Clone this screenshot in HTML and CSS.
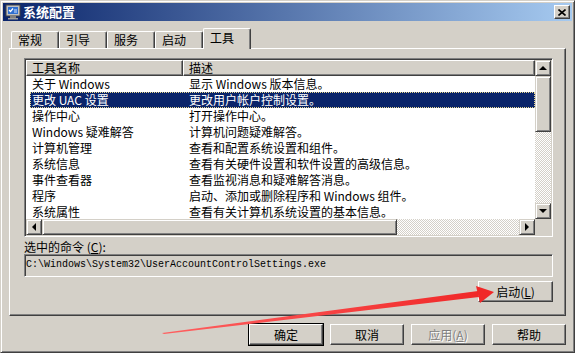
FILE: index.html
```html
<!DOCTYPE html>
<html lang="zh-CN">
<head>
    <meta charset="UTF-8">
    <title>系统配置</title>
    <link rel="stylesheet" href="styles.css">
</head>
<body>
    <div class="window">
        <div class="titlebar">
            <svg class="app-icon" width="16" height="16" viewBox="0 0 16 16">
                <rect x="1" y="1" width="14" height="11" fill="#c0c0c0" stroke="#404040"/>
                <rect x="3" y="3" width="10" height="7" fill="#2f6fd0"/>
                <path d="M4 6l1.5 1.5L8 4.5" stroke="#fff" stroke-width="1.2" fill="none"/>
                <path d="M9 6h3M9 8h3" stroke="#cfe2ff" stroke-width="1"/>
                <rect x="5" y="12" width="6" height="2" fill="#808080"/>
                <rect x="3" y="14" width="10" height="1.5" fill="#a0a0a0"/>
            </svg>
            <span class="title">系统配置</span>
            <div class="close-btn">
                <svg width="8" height="7" viewBox="0 0 8 7">
                    <path d="M0.5 0.5L7.5 6.5M7.5 0.5L0.5 6.5" stroke="#000" stroke-width="1.6"/>
                </svg>
            </div>
        </div>

        <div class="client">
            <div class="tabs">
                <div class="tab">常规</div>
                <div class="tab">引导</div>
                <div class="tab">服务</div>
                <div class="tab">启动</div>
                <div class="tab active">工具</div>
            </div>

            <div class="panel">
                <div class="listview">
                    <div class="lv-body">
                        <div class="lv-header">
                            <div class="hcell c1">工具名称</div>
                            <div class="hcell c2">描述</div>
                        </div>
                        <div class="row"><div class="c1">关于 Windows</div><div class="c2">显示 Windows 版本信息。</div></div>
                        <div class="row selected"><div class="c1">更改 UAC 设置</div><div class="c2">更改用户帐户控制设置。</div></div>
                        <div class="row"><div class="c1">操作中心</div><div class="c2">打开操作中心。</div></div>
                        <div class="row"><div class="c1">Windows 疑难解答</div><div class="c2">计算机问题疑难解答。</div></div>
                        <div class="row"><div class="c1">计算机管理</div><div class="c2">查看和配置系统设置和组件。</div></div>
                        <div class="row"><div class="c1">系统信息</div><div class="c2">查看有关硬件设置和软件设置的高级信息。</div></div>
                        <div class="row"><div class="c1">事件查看器</div><div class="c2">查看监视消息和疑难解答消息。</div></div>
                        <div class="row"><div class="c1">程序</div><div class="c2">启动、添加或删除程序和 Windows 组件。</div></div>
                        <div class="row"><div class="c1">系统属性</div><div class="c2">查看有关计算机系统设置的基本信息。</div></div>
                    </div>
                    <div class="vscroll">
                        <div class="sbtn"><span class="tri up"></span></div>
                        <div class="thumb"></div>
                        <div class="track"></div>
                        <div class="sbtn"><span class="tri down"></span></div>
                    </div>
                    <div class="hscroll">
                        <div class="sbtn"><span class="tri left"></span></div>
                        <div class="thumb"></div>
                        <div class="track"></div>
                        <div class="sbtn"><span class="tri right"></span></div>
                    </div>
                    <div class="corner"></div>
                </div>

                <div class="cmd-label">选中的命令 (<u>C</u>):</div>
                <div class="cmd-box">C:\Windows\System32\UserAccountControlSettings.exe</div>

                <div class="launch-row">
                    <button class="btn">启动(<u>L</u>)</button>
                </div>
            </div>

            <div class="dialog-buttons">
                <button class="btn default">确定</button>
                <button class="btn">取消</button>
                <button class="btn disabled">应用(<u>A</u>)</button>
                <button class="btn">帮助</button>
            </div>
        </div>
    </div>

    <svg class="red-arrow" width="575" height="353" viewBox="0 0 575 353">
        <defs>
            <linearGradient id="arrowFill" x1="0" y1="0" x2="1" y2="0">
                <stop offset="0" stop-color="#ff6060"/>
                <stop offset="1" stop-color="#f02828"/>
            </linearGradient>
        </defs>
        <polygon points="162,333 478,291 479,297 164,334" fill="url(#arrowFill)"/>
        <polygon points="476,286 494,292 480,303" fill="#f02828"/>
    </svg>
</body>
</html>
```

FILE: styles.css
```css
* {
    margin: 0;
    padding: 0;
    box-sizing: border-box;
}

body {
    position: relative;
    width: 575px;
    height: 353px;
    font-family: "Noto Sans CJK SC", "DejaVu Sans", sans-serif;
    font-size: 12px;
    color: #000;
    background: #d4d0c8;
    overflow: hidden;
}

.window {
    width: 575px;
    height: 353px;
    background: #d4d0c8;
    border: 1px solid;
    border-color: #d4d0c8 #404040 #404040 #d4d0c8;
    box-shadow: inset 1px 1px #fff, inset -1px -1px #808080;
    padding: 2px;
    display: flex;
    flex-direction: column;
}

.titlebar {
    height: 18px;
    display: flex;
    align-items: center;
    padding: 0 2px 0 2px;
    background: linear-gradient(to right, #0a246a, #a6caf0);
}

.app-icon {
    flex: none;
}

.title {
    margin-left: 2px;
    color: #fff;
    font-size: 13px;
    font-weight: bold;
    line-height: 16px;
}

.close-btn {
    margin-left: auto;
    width: 16px;
    height: 14px;
    display: flex;
    align-items: center;
    justify-content: center;
    background: #d4d0c8;
    border: 1px solid;
    border-color: #fff #404040 #404040 #fff;
    box-shadow: inset -1px -1px #808080;
}

.client {
    flex: 1;
    display: flex;
    flex-direction: column;
    padding: 7px 6px 0 6px;
}

/* tabs */
.tabs {
    height: 20px;
    display: flex;
    align-items: flex-end;
    padding-left: 2px;
}

.tab {
    width: 48px;
    height: 17px;
    padding-left: 6px;
    line-height: 16px;
    border: 1px solid;
    border-color: #fff #404040 transparent #fff;
    border-bottom: none;
    border-radius: 2px 2px 0 0;
    box-shadow: inset -1px 0 #808080;
}

.tab.active {
    position: relative;
    z-index: 1;
    height: 21px;
    margin-bottom: -1px;
    line-height: 17px;
    background: #d4d0c8;
}

.panel {
    height: 268px;
    padding: 9px 0 0 14px;
    border: 1px solid;
    border-color: #fff #404040 #404040 #fff;
    box-shadow: inset -1px -1px #808080;
}

/* list view */
.listview {
    width: 529px;
    height: 179px;
    display: grid;
    grid-template-columns: 1fr 16px;
    grid-template-rows: 1fr 16px;
    background: #fff;
    border: 1px solid;
    border-color: #808080 #fff #fff #808080;
    box-shadow: inset 1px 1px #404040, inset -1px -1px #d4d0c8;
    padding: 1px;
}

.lv-body {
    overflow: hidden;
}

.lv-header {
    display: flex;
    height: 16px;
    background: #d4d0c8;
}

.hcell {
    height: 16px;
    line-height: 14px;
    padding-left: 5px;
    border: 1px solid;
    border-color: #fff #404040 #404040 #fff;
    box-shadow: inset -1px -1px #808080;
}

.hcell.c1 {
    width: 157px;
}

.hcell.c2 {
    flex: 1;
}

.row {
    display: flex;
    height: 16px;
    margin-left: 4px;
    line-height: 16px;
    white-space: nowrap;
}

.row .c1 {
    width: 153px;
    padding-left: 2px;
}

.row .c2 {
    padding-left: 6px;
}

.row.selected {
    background: #0a246a;
    color: #fff;
    outline: 1px dotted #e8d890;
    outline-offset: -1px;
}

/* scroll bars */
.vscroll {
    display: grid;
    grid-template-rows: 16px 56px 1fr 16px;
}

.hscroll {
    display: grid;
    grid-template-columns: 16px 355px 1fr 16px;
}

.sbtn,
.thumb {
    display: flex;
    align-items: center;
    justify-content: center;
    background: #d4d0c8;
    border: 1px solid;
    border-color: #d4d0c8 #404040 #404040 #d4d0c8;
    box-shadow: inset 1px 1px #fff, inset -1px -1px #808080;
}

.track {
    background: repeating-conic-gradient(#fff 0 25%, #d4d0c8 0 50%) 0 0 / 2px 2px;
}

.corner {
    background: #d4d0c8;
}

.tri {
    width: 0;
    height: 0;
    border: 4px solid transparent;
}

.tri.up {
    border-top: none;
    border-bottom-color: #000;
}

.tri.down {
    border-bottom: none;
    border-top-color: #000;
}

.tri.left {
    border-left: none;
    border-right-color: #000;
}

.tri.right {
    border-right: none;
    border-left-color: #000;
}

/* command */
.cmd-label {
    padding-top: 2px;
    height: 17px;
    line-height: 15px;
}

.cmd-box {
    width: 529px;
    height: 23px;
    padding-left: 1px;
    font-family: "Liberation Mono", monospace;
    font-size: 10px;
    line-height: 19px;
    border: 1px solid;
    border-color: #808080 #fff #fff #808080;
    box-shadow: inset 1px 1px #404040, inset -1px -1px #d4d0c8;
}

.cmd-box,
.cmd-label {
    white-space: nowrap;
}

.launch-row {
    width: 529px;
    display: flex;
    justify-content: flex-end;
    margin-top: 4px;
}

/* buttons */
.btn {
    width: 75px;
    height: 21px;
    font: inherit;
    line-height: 17px;
    color: #000;
    background: #d4d0c8;
    border: 1px solid;
    border-color: #fff #404040 #404040 #fff;
    box-shadow: inset -1px -1px #808080;
}

.dialog-buttons {
    display: flex;
    justify-content: flex-end;
    gap: 7px;
    margin-top: 8px;
}

.dialog-buttons .btn {
    width: 74px;
}

.btn.default {
    outline: 1px solid #000;
    outline-offset: 0;
}

.btn.disabled {
    color: #808080;
    text-shadow: 1px 1px #fff;
}

.red-arrow {
    position: absolute;
    left: 0;
    top: 0;
    pointer-events: none;
}
```
